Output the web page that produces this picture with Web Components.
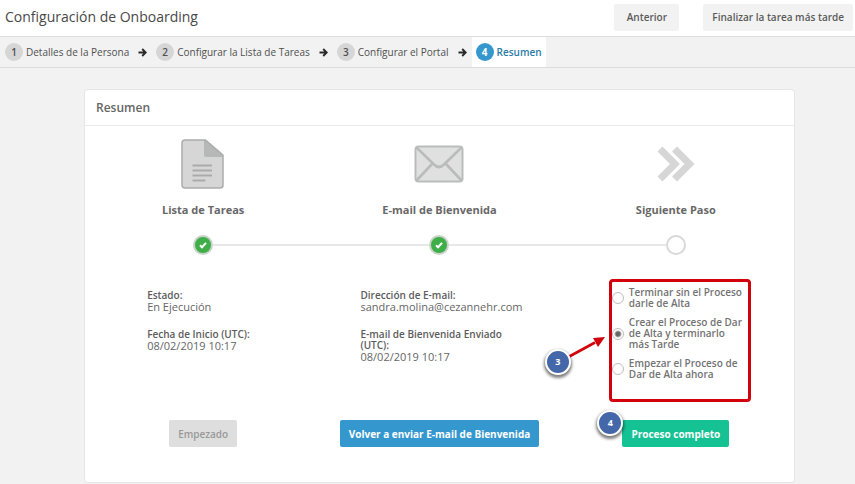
<!DOCTYPE html>
<html lang="es">
<head>
<meta charset="utf-8">
<meta name="viewport" content="width=device-width, initial-scale=1">
<title>Configuración de Onboarding</title>
<style>
    body {
        margin: 0;
        background: #F2F2F2;
        color: #5C5C5C;
        font: 11px/16px "Open Sans", "Noto Sans", sans-serif;
        --border-color: #DCDCDC;
        --primary-color: #3498CF;
        --success-color: #14C293;
        --mark-color: #D1020C;
    }
</style>
</head>
<body>
<onboarding-page></onboarding-page>

<script>
class PageHeader extends HTMLElement {
    constructor() {
        super();
        this.attachShadow({ mode: 'open' });
        this.shadowRoot.innerHTML = `
            <style>
                :host {
                    display: flex;
                    align-items: center;
                    justify-content: space-between;
                    height: 34px;
                    padding: 0 2px 2px 5px;
                    background: #FFF;
                    border-bottom: 1px solid var(--border-color);
                }
                h1 {
                    margin: 0;
                    font-size: 14px;
                    line-height: 20px;
                    font-weight: 400;
                    color: #484848;
                }
                .actions {
                    display: flex;
                    gap: 24px;
                }
            </style>
            <h1><slot></slot></h1>
            <div class="actions"><slot name="actions"></slot></div>
        `;
    }
}

class AppButton extends HTMLElement {
    connectedCallback() {
        if (this.shadowRoot) return;
        this.attachShadow({ mode: 'open' });
        this.shadowRoot.innerHTML = `
            <style>
                :host {
                    display: inline-block;
                }
                button {
                    display: block;
                    min-width: 65px;
                    height: 27px;
                    padding: 0 9px;
                    border: 0;
                    border-radius: 2px;
                    background: #F2F2F2;
                    color: #5A5A5A;
                    font: inherit;
                    font-size: 10px;
                    font-weight: 600;
                    white-space: nowrap;
                    cursor: pointer;
                }
                :host([variant]) button {
                    font-weight: 700;
                    color: #FFF;
                }
                :host([variant="primary"]) button {
                    background: var(--primary-color);
                }
                :host([variant="success"]) button {
                    background: var(--success-color);
                }
                :host([variant="disabled"]) button {
                    background: #DEDEDE;
                    color: #999;
                    font-weight: 600;
                    cursor: default;
                }
            </style>
            <button type="button" ${this.getAttribute('variant') === 'disabled' ? 'disabled' : ''}><slot></slot></button>
        `;
    }
}

class WizardNav extends HTMLElement {
    constructor() {
        super();
        this.attachShadow({ mode: 'open' });
        this.shadowRoot.innerHTML = `
            <style>
                :host {
                    display: block;
                    border-bottom: 1px solid var(--border-color);
                }
                nav {
                    display: flex;
                    height: 30px;
                    padding-left: 1px;
                }
            </style>
            <nav aria-label="Pasos"><slot></slot></nav>
        `;
    }
}

class WizardStep extends HTMLElement {
    connectedCallback() {
        if (this.shadowRoot) return;
        this.attachShadow({ mode: 'open' });
        const number = this.getAttribute('number');
        const active = this.hasAttribute('active');

        this.shadowRoot.innerHTML = `
            <style>
                :host {
                    display: flex;
                    align-items: center;
                    font-size: 10px;
                }
                a {
                    display: flex;
                    align-items: center;
                    gap: 3px;
                    height: 30px;
                    padding: 0 4px;
                    color: #505050;
                    text-decoration: none;
                    white-space: nowrap;
                }
                .number {
                    width: 18px;
                    border-radius: 50%;
                    background: #D6D6D6;
                    line-height: 18px;
                    font-weight: 600;
                    text-align: center;
                }
                svg {
                    width: 9px;
                    height: 9px;
                    margin: 0 5px;
                }
                :host([active]) a {
                    background: #FFF;
                    color: #2A7CA8;
                    font-weight: 600;
                }
                :host([active]) .number {
                    background: var(--primary-color);
                    color: #FFF;
                    font-weight: 700;
                }
            </style>
            <a href="#paso-${number}" ${active ? 'aria-current="step"' : ''}>
                <span class="number">${number}</span>
                <span><slot></slot></span>
            </a>
            ${active ? '' : `
            <svg viewBox="0 0 9 9" aria-hidden="true">
                <path d="M0.5 4.5H7M4.2 1L7.7 4.5L4.2 8" fill="none" stroke="#2B2B2B" stroke-width="1.9"/>
            </svg>`}
        `;
    }
}

class SummaryCard extends HTMLElement {
    constructor() {
        super();
        this.attachShadow({ mode: 'open' });
        this.shadowRoot.innerHTML = `
            <style>
                :host {
                    display: block;
                    background: #FFF;
                    border: 1px solid #E6E6E6;
                    border-radius: 4px;
                }
                h2 {
                    margin: 0;
                    padding: 9px 11px 8px;
                    border-bottom: 1px solid #EBEBEB;
                    font-size: 12px;
                    line-height: 18px;
                    font-weight: 600;
                    color: #666;
                }
                .columns {
                    display: grid;
                    grid-template-columns: repeat(3, 1fr);
                    padding: 13px 0 35px;
                }
            </style>
            <h2><slot name="title"></slot></h2>
            <div class="columns"><slot></slot></div>
        `;
    }
}

const ICONS = {
    document: `
        <svg width="44" height="50" viewBox="0 0 44 50">
            <path d="M4 1H24.5L42 16V46Q42 49 39 49H4Q1 49 1 46V4Q1 1 4 1Z" fill="#D6D6D6"/>
            <path d="M23 1H24.5L42 16V18H25Q23 18 23 16Z" fill="#B5B8B7"/>
            <path d="M4 1H24.5L42 16V46Q42 49 39 49H4Q1 49 1 46V4Q1 1 4 1Z" fill="none" stroke="#ABADAC" stroke-width="1.5" stroke-linejoin="round"/>
            <path d="M11.5 26.5H31M11.5 31.5H31M11.5 36.5H31M11.5 41.5H24.5" stroke="#A9ABAA" stroke-width="1.8"/>
        </svg>`,
    mail: `
        <svg width="50" height="38" viewBox="0 0 50 38">
            <rect x="1.5" y="1.5" width="47" height="35" rx="3" fill="#E0E0E0" stroke="#BABCBB" stroke-width="2"/>
            <path d="M2.5 2.5L20 19.5Q25 24.5 30 19.5L47.5 2.5M2.5 35.5L18 19M47.5 35.5L32 19" fill="none" stroke="#BABCBB" stroke-width="2.6"/>
        </svg>`,
    next: `
        <svg width="38" height="38" viewBox="0 0 38 38">
            <path d="M3 4L18 19L3 34M17.5 4L32.5 19L17.5 34" fill="none" stroke="#D6D6D6" stroke-width="7"/>
        </svg>`
};

class ProcessColumn extends HTMLElement {
    connectedCallback() {
        if (this.shadowRoot) return;
        this.attachShadow({ mode: 'open' });
        this.shadowRoot.innerHTML = `
            <style>
                :host {
                    display: flex;
                    flex-direction: column;
                    align-items: center;
                }
                .icon {
                    display: flex;
                    align-items: center;
                    justify-content: center;
                    height: 50px;
                }
                h3 {
                    margin: 12px 0 16px;
                    font-size: 11px;
                    line-height: 18px;
                    font-weight: 700;
                    color: #686868;
                }
                .track {
                    display: grid;
                    grid-template-columns: 1fr 20px 1fr;
                    align-items: center;
                    align-self: stretch;
                }
                .line {
                    height: 2px;
                    background: #E8E8E8;
                }
                :host([position="first"]) .line:first-child,
                :host([position="last"]) .line:last-child {
                    visibility: hidden;
                }
                .dot {
                    box-sizing: border-box;
                    display: grid;
                    place-items: center;
                    width: 20px;
                    height: 20px;
                    border: 2px solid #D8D8D8;
                    border-radius: 50%;
                    background: #FFF;
                }
                .dot.done {
                    border-color: #C9D2C9;
                    background: #3FAE49;
                }
                .details {
                    flex: 1;
                    padding: 32px 0 40px;
                }
            </style>
            <div class="icon" aria-hidden="true">${ICONS[this.getAttribute('icon')]}</div>
            <h3><slot name="title"></slot></h3>
            <div class="track">
                <span class="line"></span>
                ${this.hasAttribute('done') ? `
                <span class="dot done">
                    <svg width="8" height="8" viewBox="0 0 8 8"><path d="M1 4.2L3 6.2L7 1.8" fill="none" stroke="#FFF" stroke-width="2"/></svg>
                </span>` : '<span class="dot"></span>'}
                <span class="line"></span>
            </div>
            <div class="details"><slot></slot></div>
            <div><slot name="action"></slot></div>
        `;
    }
}

class DetailList extends HTMLElement {
    constructor() {
        super();
        this.attachShadow({ mode: 'open' });
        this.shadowRoot.innerHTML = `
            <style>
                :host {
                    display: flex;
                    flex-direction: column;
                    gap: 17px;
                    min-width: 112px;
                    max-width: 158px;
                    padding-top: 3px;
                    line-height: 11px;
                }
            </style>
            <slot></slot>
        `;
    }
}

class DetailItem extends HTMLElement {
    constructor() {
        super();
        this.attachShadow({ mode: 'open' });
        this.shadowRoot.innerHTML = `
            <style>
                :host {
                    display: block;
                }
                .label {
                    font-size: 10px;
                    font-weight: 600;
                }
                .value {
                    color: #666;
                }
            </style>
            <div class="label"><slot name="label"></slot></div>
            <div class="value"><slot></slot></div>
        `;
    }
}

class CalloutBadge extends HTMLElement {
    constructor() {
        super();
        this.attachShadow({ mode: 'open' });
        this.shadowRoot.innerHTML = `
            <style>
                :host {
                    display: block;
                    width: 22px;
                    border: 2px solid #FFF;
                    border-radius: 50%;
                    background: #4467A9;
                    box-shadow: 0 2px 3px 1px rgba(0, 0, 0, 0.5);
                    color: #FFF;
                    font-size: 9px;
                    line-height: 22px;
                    font-weight: 700;
                    text-align: center;
                }
            </style>
            <slot></slot>
        `;
    }
}

class NextStepOptions extends HTMLElement {
    constructor() {
        super();
        this.attachShadow({ mode: 'open' });
        this.shadowRoot.innerHTML = `
            <style>
                :host {
                    display: block;
                    position: relative;
                    width: 134px;
                    padding-left: 6px;
                }
                fieldset {
                    display: flex;
                    flex-direction: column;
                    gap: 8px;
                    margin: 0;
                    padding: 0;
                    border: 0;
                }
                label {
                    display: flex;
                    align-items: center;
                    gap: 5px;
                    font-size: 10px;
                    line-height: 11px;
                    font-weight: 600;
                    color: #737373;
                }
                input {
                    appearance: none;
                    flex: none;
                    width: 12px;
                    height: 12px;
                    margin: 0;
                    border: 1px solid #BDBDBD;
                    border-radius: 50%;
                    background: #FFF;
                }
                input:checked {
                    background: radial-gradient(circle, #666 2px, #FFF 4px);
                }
                /* tutorial marks drawn over the form */
                .frame {
                    position: absolute;
                    inset: -8px -5px -22px 3px;
                    border: 3px solid var(--mark-color);
                    border-radius: 4px;
                    pointer-events: none;
                }
                .arrow {
                    position: absolute;
                    left: -49px;
                    top: 48px;
                    pointer-events: none;
                }
                callout-badge {
                    position: absolute;
                    left: -61px;
                    top: 62px;
                }
            </style>
            <fieldset aria-label="Siguiente Paso">
                <label><input type="radio" name="next"><span>Terminar sin el Proceso darle de Alta</span></label>
                <label><input type="radio" name="next" checked><span>Crear el Proceso de Dar de Alta y terminarlo más Tarde</span></label>
                <label><input type="radio" name="next"><span>Empezar el Proceso de Dar de Alta ahora</span></label>
            </fieldset>
            <div class="frame"></div>
            <svg class="arrow" width="50" height="28" viewBox="0 0 50 28" aria-hidden="true">
                <path d="M4 26L38 7.5" stroke="var(--mark-color)" stroke-width="2.6"/>
                <path d="M48 2L36 3L41 12Z" fill="var(--mark-color)"/>
            </svg>
            <callout-badge>3</callout-badge>
        `;
    }
}

class MarkedAction extends HTMLElement {
    constructor() {
        super();
        this.attachShadow({ mode: 'open' });
        this.shadowRoot.innerHTML = `
            <style>
                :host {
                    display: block;
                    position: relative;
                }
                callout-badge {
                    position: absolute;
                    left: -25px;
                    top: -10px;
                }
            </style>
            <slot></slot>
            <callout-badge>4</callout-badge>
        `;
    }
}

class OnboardingPage extends HTMLElement {
    constructor() {
        super();
        this.attachShadow({ mode: 'open' });
        this.shadowRoot.innerHTML = `
            <style>
                :host {
                    display: block;
                }
                main {
                    padding: 21px 60px 0 84px;
                }
            </style>
            <page-header>
                Configuración de Onboarding
                <app-button slot="actions">Anterior</app-button>
                <app-button slot="actions">Finalizar la tarea más tarde</app-button>
            </page-header>
            <wizard-nav>
                <wizard-step number="1">Detalles de la Persona</wizard-step>
                <wizard-step number="2">Configurar la Lista de Tareas</wizard-step>
                <wizard-step number="3">Configurar el Portal</wizard-step>
                <wizard-step number="4" active>Resumen</wizard-step>
            </wizard-nav>
            <main>
                <summary-card>
                    <span slot="title">Resumen</span>
                    <process-column icon="document" position="first" done>
                        <span slot="title">Lista de Tareas</span>
                        <detail-list>
                            <detail-item><span slot="label">Estado:</span>En Ejecución</detail-item>
                            <detail-item><span slot="label">Fecha de Inicio (UTC):</span>08/02/2019 10:17</detail-item>
                        </detail-list>
                        <app-button slot="action" variant="disabled">Empezado</app-button>
                    </process-column>
                    <process-column icon="mail" done>
                        <span slot="title">E-mail de Bienvenida</span>
                        <detail-list>
                            <detail-item><span slot="label">Dirección de E-mail:</span>sandra.molina@cezannehr.com</detail-item>
                            <detail-item><span slot="label">E-mail de Bienvenida Enviado (UTC):</span>08/02/2019 10:17</detail-item>
                        </detail-list>
                        <app-button slot="action" variant="primary">Volver a enviar E-mail de Bienvenida</app-button>
                    </process-column>
                    <process-column icon="next" position="last">
                        <span slot="title">Siguiente Paso</span>
                        <next-step-options></next-step-options>
                        <marked-action slot="action">
                            <app-button variant="success">Proceso completo</app-button>
                        </marked-action>
                    </process-column>
                </summary-card>
            </main>
        `;
    }
}

customElements.define('page-header', PageHeader);
customElements.define('app-button', AppButton);
customElements.define('wizard-nav', WizardNav);
customElements.define('wizard-step', WizardStep);
customElements.define('summary-card', SummaryCard);
customElements.define('process-column', ProcessColumn);
customElements.define('detail-list', DetailList);
customElements.define('detail-item', DetailItem);
customElements.define('callout-badge', CalloutBadge);
customElements.define('next-step-options', NextStepOptions);
customElements.define('marked-action', MarkedAction);
customElements.define('onboarding-page', OnboardingPage);
</script>
</body>
</html>
